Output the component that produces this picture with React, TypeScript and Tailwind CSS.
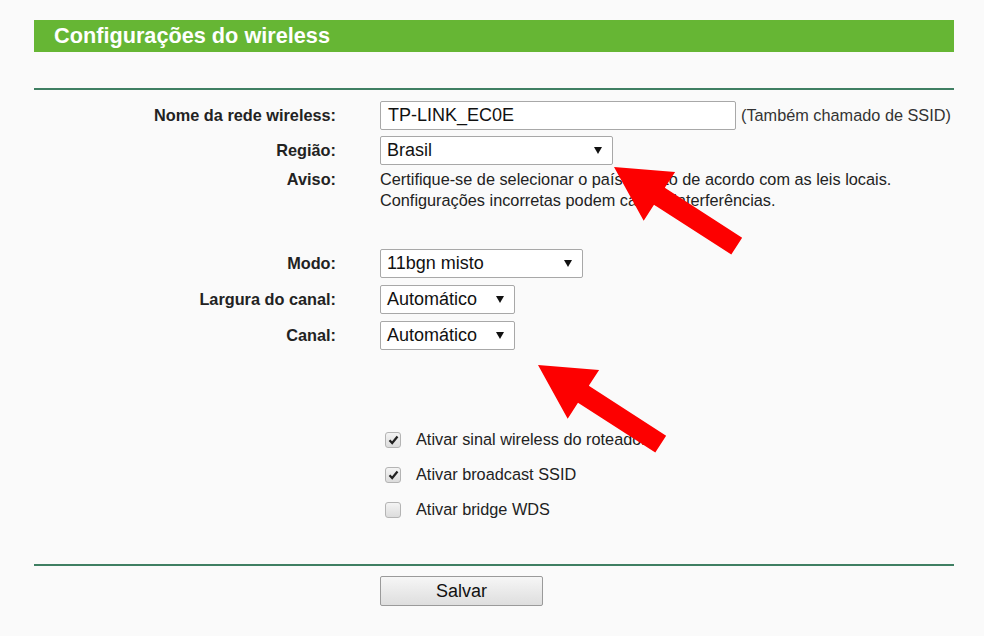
import React from 'react'

const Caret = () => (
    <svg width="8" height="7" viewBox="0 0 8 7" className="shrink-0">
        <polygon points="0,0 8,0 4,7" fill="#111" />
    </svg>
)

const Select = ({ value, width }: { value: string; width: string }) => (
    <div
        className={`flex h-full ${width} items-center justify-between rounded-[2px] border border-[#a8a8a8] bg-white pl-[6px] pr-[10px] text-[18px] text-[#111]`}
    >
        <span>{value}</span>
        <Caret />
    </div>
)

const Row = ({
    label,
    children,
    className = '',
}: {
    label: string
    children: React.ReactNode
    className?: string
}) => (
    <div className={`flex h-[29px] items-center ${className}`}>
        <div className="w-[302px] text-right font-bold text-[#222]">{label}</div>
        <div className="ml-[44px] flex h-full items-center">{children}</div>
    </div>
)

const Checkbox = ({ label, checked }: { label: string; checked: boolean }) => (
    <div className="flex h-[35px] items-center pl-[5px]">
        <div className="flex h-[16px] w-[16px] items-center justify-center rounded-[3px] border border-[#b4b4b4] bg-gradient-to-b from-[#f4f4f4] to-[#dcdcdc]">
            {checked && (
                <svg width="11" height="10" viewBox="0 0 11 10">
                    <path d="M1.5 5.2 L4.2 8 L9.5 1.5" fill="none" stroke="#222" strokeWidth="2.2" />
                </svg>
            )}
        </div>
        <span className="ml-[15px] text-[#222]">{label}</span>
    </div>
)

// red annotation arrow, tip at origin, tail pointing down-right
const Arrow = ({ x, y }: { x: number; y: number }) => (
    <g transform={`translate(${x} ${y}) rotate(32.8)`}>
        <polygon points="0,0 54,-29 54,-10 146,-10 146,10 54,10 54,29" fill="#fd0000" />
    </g>
)

export default function App() {
    return (
        <div className="relative min-h-[636px] w-full bg-[#fafafa] pt-5 font-['Liberation_Sans',Arial,sans-serif] text-[16.3px]">
            <div className="ml-[34px] w-[920px]">
                {/* Header */}
                <div className="flex h-8 items-center bg-[#66b634] pl-5 text-[21.7px] font-bold text-white">
                    Configurações do wireless
                </div>
                <div className="mt-9 h-[2px] bg-[#3f7f62]" />

                {/* Form */}
                <Row label="Nome da rede wireless:" className="mt-[11px]">
                    <div className="flex h-full w-[356px] items-center rounded-[2px] border border-[#a8a8a8] bg-white pl-[7px] text-[18px] text-[#111]">
                        TP-LINK_EC0E
                    </div>
                    <span className="ml-[5px] text-[#333]">(Também chamado de SSID)</span>
                </Row>
                <Row label="Região:" className="mt-[6px]">
                    <Select value="Brasil" width="w-[233px]" />
                </Row>
                <div className="mt-[4px] flex items-start leading-[21px]">
                    <div className="w-[302px] text-right font-bold text-[#222]">Aviso:</div>
                    <div className="ml-[44px] text-[#222]">
                        <div>Certifique-se de selecionar o país correto de acordo com as leis locais.</div>
                        <div>Configurações incorretas podem causar interferências.</div>
                    </div>
                </div>

                <Row label="Modo:" className="mt-[38px]">
                    <Select value="11bgn misto" width="w-[203px]" />
                </Row>
                <Row label="Largura do canal:" className="mt-[7px]">
                    <Select value="Automático" width="w-[135px]" />
                </Row>
                <Row label="Canal:" className="mt-[7px]">
                    <Select value="Automático" width="w-[135px]" />
                </Row>

                {/* Options */}
                <div className="ml-[346px] mt-[72px]">
                    <Checkbox label="Ativar sinal wireless do roteador" checked />
                    <Checkbox label="Ativar broadcast SSID" checked />
                    <Checkbox label="Ativar bridge WDS" checked={false} />
                </div>

                <div className="mt-[37px] h-[2px] bg-[#3f7f62]" />

                <button className="ml-[346px] mt-[10px] h-[30px] w-[163px] rounded-[2px] border border-[#9a9a9a] bg-gradient-to-b from-[#f6f6f6] to-[#dedede] text-[18px] text-[#111]">
                    Salvar
                </button>
            </div>

            {/* Annotation arrows */}
            <svg className="pointer-events-none absolute left-0 top-0" width="984" height="636">
                <Arrow x={614} y={167} />
                <Arrow x={538} y={365} />
            </svg>
        </div>
    )
}
